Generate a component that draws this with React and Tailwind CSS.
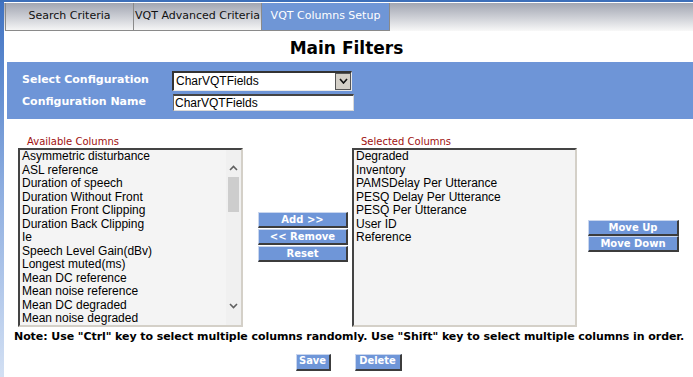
const available = [
  'Asymmetric disturbance',
  'ASL reference',
  'Duration of speech',
  'Duration Without Front',
  'Duration Front Clipping',
  'Duration Back Clipping',
  'Ie',
  'Speech Level Gain(dBv)',
  'Longest muted(ms)',
  'Mean DC reference',
  'Mean noise reference',
  'Mean DC degraded',
  'Mean noise degraded',
]

const selected = [
  'Degraded',
  'Inventory',
  'PAMSDelay Per Utterance',
  'PESQ Delay Per Utterance',
  'PESQ Per Utterance',
  'User ID',
  'Reference',
]

const verdana = "font-['DejaVu_Sans',Verdana,sans-serif]"
const arial = "font-['Liberation_Sans',Arial,sans-serif]"

function Tab({ label, active }) {
  return (
    <div
      className={`flex h-full w-[128px] items-center justify-center border-r border-b border-[#8a8a8a] text-[11px] ${
        active ? 'bg-[#6f96d6] text-white' : 'text-[#111]'
      }`}
    >
      {label}
    </div>
  )
}

function BlueButton({ children, className = '' }) {
  return (
    <button
      type="button"
      className={`flex items-center justify-center border-t border-l border-t-[#c9d6ee] border-l-[#c9d6ee] border-b-2 border-r-2 border-b-[#3c3c3c] border-r-[#3c3c3c] bg-[#6f96d8] text-[10px] font-bold text-white ${className}`}
    >
      {children}
    </button>
  )
}

function ListBox({ items, scroll }) {
  return (
    <div className="flex h-[179px] w-[225px] border-t-2 border-l-2 border-t-[#444] border-l-[#444] border-r-2 border-b-2 border-r-[#d4d0c8] border-b-[#d4d0c8] bg-[#f4f4f4]">
      <div className={`flex-1 overflow-hidden pl-[2px] text-[12px] leading-[13.5px] text-black ${arial}`}>
        {items.map((item) => (
          <div key={item} className="whitespace-nowrap">
            {item}
          </div>
        ))}
      </div>
      {scroll ? (
        <div className="flex w-[15px] flex-col items-center bg-[#f0f0f0]">
          <svg className="mt-[15px]" width="9" height="6" viewBox="0 0 9 6">
            <path d="M1 5 L4.5 1.5 L8 5" fill="none" stroke="#606060" strokeWidth="1.6" />
          </svg>
          <div className="mt-[6px] h-[35px] w-[11px] bg-[#cdcdcd]" />
          <div className="flex-1" />
          <svg className="mb-[16px]" width="9" height="6" viewBox="0 0 9 6">
            <path d="M1 1 L4.5 4.5 L8 1" fill="none" stroke="#606060" strokeWidth="1.6" />
          </svg>
        </div>
      ) : null}
    </div>
  )
}

export default function App() {
  return (
    <div className={`flex h-[377px] w-[693px] flex-col overflow-hidden bg-white ${verdana}`}>
      <div className="h-[2px] w-full bg-[#3d6fb9]" />
      <div className="flex flex-1">
        <div className="w-[4px] bg-gradient-to-b from-[#3f72c2] via-[#8eaee0] to-[#d3e0f3]" />
        <div className="flex flex-1 flex-col">
          <div className="mt-[1px] flex h-[28px] bg-gradient-to-b from-[#a2a6b2] to-[#f8f8f8] pl-[1px]">
            <div className="flex h-full border-l border-[#8a8a8a]">
              <Tab label="Search Criteria" />
              <Tab label="VQT Advanced Criteria" />
              <Tab label="VQT Columns Setup" active />
            </div>
          </div>

          <h1 className="mt-[6px] ml-[-4px] text-center text-[17px] leading-[22px] font-bold text-black">Main Filters</h1>

          <div className="mt-[3px] ml-[3px] flex h-[57px] flex-col justify-center gap-[3px] bg-[#6e95d7] pl-[15px] text-[11px] font-bold text-white">
            <div className="flex items-center">
              <span className="w-[150px]">Select Configuration</span>
              <div className="flex h-[20px] w-[180px] items-center border-t-2 border-l-2 border-t-[#333] border-l-[#333] border-b border-r border-b-[#e8e8e8] border-r-[#e8e8e8] bg-white">
                <span className={`flex-1 pl-[2px] text-[12px] font-normal text-black ${arial}`}>CharVQTFields</span>
                <div className="flex h-[17px] w-[16px] items-center justify-center border border-[#555] bg-[#d4d0c8]">
                  <svg width="9" height="6" viewBox="0 0 9 6">
                    <path d="M1 1 L4.5 5 L8 1" fill="none" stroke="#111" strokeWidth="1.6" />
                  </svg>
                </div>
              </div>
            </div>
            <div className="flex items-center">
              <span className="w-[151px]">Configuration Name</span>
              <div className="flex h-[17px] w-[181px] items-center border-t-2 border-l border-t-[#444] border-l-[#666] border-b border-r border-b-[#d8d8d8] border-r-[#d8d8d8] bg-white">
                <span className={`pl-[1px] text-[12px] font-normal text-black ${arial}`}>CharVQTFields</span>
              </div>
            </div>
          </div>

          <div className="mt-[17px] flex">
            <div className="ml-[14px] flex flex-col">
              <span className="ml-[9px] text-[10px] leading-[12px] text-[#a01010]">Available Columns</span>
              <ListBox items={available} scroll />
            </div>
            <div className="ml-[15px] mt-[76px] flex w-[90px] flex-col gap-[1px]">
              <BlueButton className="h-[16px]">Add &gt;&gt;</BlueButton>
              <BlueButton className="h-[16px]">&lt;&lt; Remove</BlueButton>
              <BlueButton className="h-[16px]">Reset</BlueButton>
            </div>
            <div className="ml-[4px] flex flex-col">
              <span className="ml-[9px] text-[10px] leading-[12px] text-[#a01010]">Selected Columns</span>
              <ListBox items={selected} />
            </div>
            <div className="ml-[11px] mt-[84px] flex w-[91px] flex-col gap-[0px]">
              <BlueButton className="h-[16px]">Move Up</BlueButton>
              <BlueButton className="h-[16px]">Move Down</BlueButton>
            </div>
          </div>

          <p className="mt-[2px] ml-[10px] whitespace-nowrap text-[11px] font-bold tracking-[-0.07px] text-black">
            Note: Use "Ctrl" key to select multiple columns randomly. Use "Shift" key to select multiple columns in order.
          </p>

          <div className="mt-[8px] flex justify-center gap-[24px] font-['DejaVu_Sans_Condensed',sans-serif]">
            <BlueButton className="h-[17px] w-[35px] text-[11px]">Save</BlueButton>
            <BlueButton className="h-[17px] w-[47px] text-[11px]">Delete</BlueButton>
          </div>
        </div>
      </div>
    </div>
  )
}
